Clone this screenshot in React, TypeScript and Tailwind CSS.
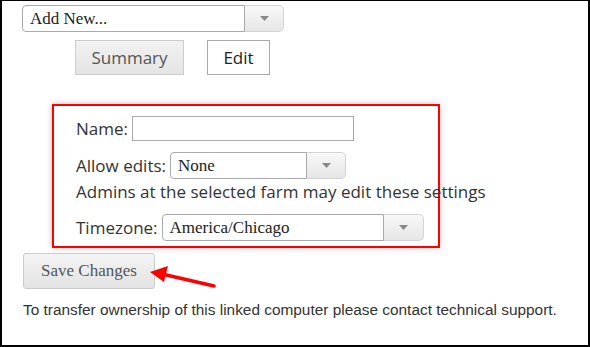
import React from 'react';

const serif = "font-['Liberation_Serif',serif]";
const sans = "font-['Open_Sans',sans-serif]";

const Caret = () => (
  <svg width="9" height="5" viewBox="0 0 9 5">
    <path d="M0 0h9L4.5 5z" fill="#888" />
  </svg>
);

const Select = ({ value, width, textWidth }: { value: string; width: string; textWidth: string }) => (
  <div className={`flex h-[27px] ${width}`}>
    <div className={`${textWidth} h-full flex items-center pl-[7px] bg-white border border-[#aaa] rounded-l-[4px] text-[17px] text-[#222] ${serif}`}>
      {value}
    </div>
    <div className="flex-1 h-full flex items-center justify-center bg-gradient-to-b from-[#f8f8f8] to-[#e6e6e6] border border-l-0 border-[#d4d4d4] rounded-r-[5px]">
      <Caret />
    </div>
  </div>
);

const App = () => {
  return <div className="relative w-[590px] h-[347px] bg-white border-x-2 border-b-2 border-t border-black overflow-hidden">
      <div className="pl-[20px] pt-[4px]">
        <Select value="Add New..." width="w-[262px]" textWidth="w-[223px]" />
        <div className="flex gap-[23px] mt-[8px] ml-[53px]">
          <button className={`w-[109px] h-[35px] border border-[#ccc] bg-gradient-to-b from-[#f2f2f2] to-[#e4e4e4] text-[17px] text-[#555] ${sans}`}>
            Summary
          </button>
          <button className={`w-[63px] h-[35px] border border-[#aaa] bg-white text-[17px] text-[#222] ${sans}`}>
            Edit
          </button>
        </div>
      </div>
      <div className={`ml-[50px] mt-[29px] w-[388px] h-[144px] border-2 border-[#f00] shadow-[0_0_6px_rgba(0,0,0,0.25)] pl-[22px] pt-[10px] text-[17px] text-[#333] ${sans}`}>
        <div className="flex items-center h-[25px]">
          <span className="mr-[4px]">Name:</span>
          <div className="w-[222px] h-[25px] border border-[#aaa] bg-white" />
        </div>
        <div className="flex items-center mt-[11px]">
          <span className="mr-[4px]">Allow edits:</span>
          <Select value="None" width="w-[176px]" textWidth="w-[137px]" />
        </div>
        <div className="whitespace-nowrap leading-[22px] mt-[2px]">Admins at the selected farm may edit these settings</div>
        <div className="flex items-center mt-[11px]">
          <span className="mr-[4px]">Timezone:</span>
          <Select value="America/Chicago" width="w-[262px]" textWidth="w-[222px]" />
        </div>
      </div>
      <div className="pl-[21px] mt-[5px]">
        <button className={`w-[132px] h-[36px] border border-[#ccc] rounded-[3px] bg-gradient-to-b from-[#f4f4f4] to-[#e3e3e3] text-[17px] text-[#555] ${serif}`}>
          Save Changes
        </button>
        <p className="mt-[9px] text-[15.4px] text-[#333] font-['Liberation_Sans',Arial,sans-serif]">
          To transfer ownership of this linked computer please contact technical support.
        </p>
      </div>
      <svg className="absolute left-[146px] top-[263px]" width="70" height="26" viewBox="0 0 70 26">
        <path d="M66 22L14 10" stroke="#f00" strokeWidth="3.5" strokeLinecap="round" />
        <path d="M2 8L20 2L16 18z" fill="#f00" />
      </svg>
    </div>;
};
export default App;
